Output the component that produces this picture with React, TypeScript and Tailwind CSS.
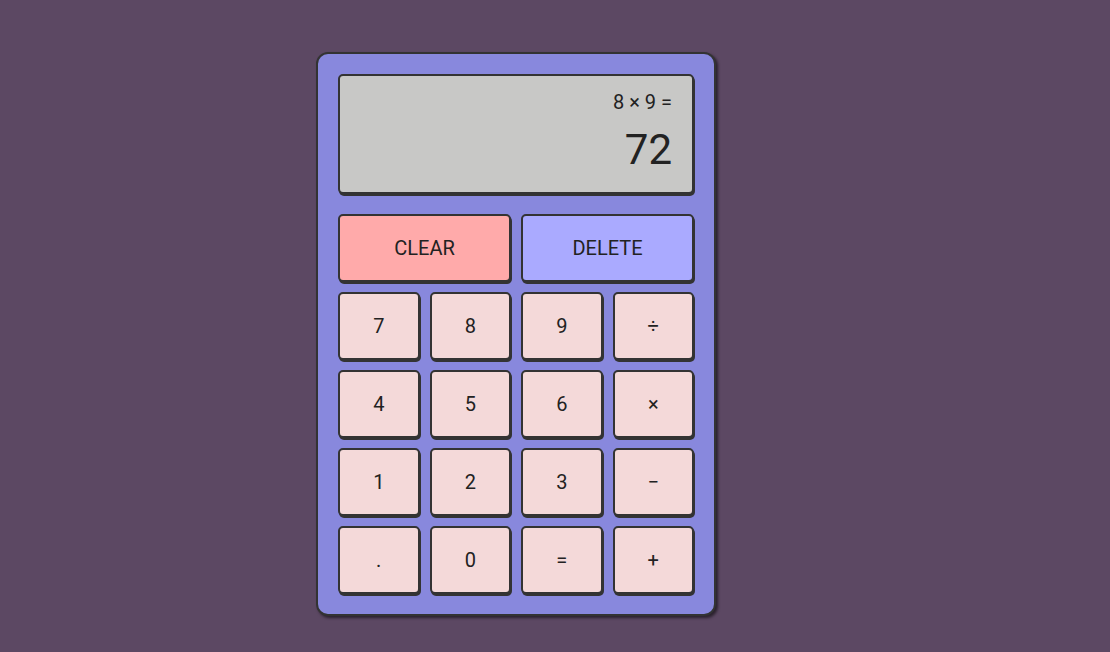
const keys = ["7", "8", "9", "÷", "4", "5", "6", "×", "1", "2", "3", "−", ".", "0", "=", "+"];

const btn =
  "h-[68px] rounded-[5px] border-2 border-[#333] shadow-[1px_2px_0_#333] text-[20px] text-[#222] flex items-center justify-center";

export default function App() {
  return (
    <div
      className="min-h-[652px] w-full bg-[#5c4863] pl-[316px] pt-[52px]"
      style={{ fontFamily: "Roboto, 'Noto Sans', sans-serif" }}
    >
      <div className="w-[400px] rounded-[12px] border-2 border-[#333] bg-[#8888dd] p-5 shadow-[2px_2px_3px_rgba(0,0,0,0.55)]">
        <div className="h-[120px] rounded-[5px] border-2 border-[#333] bg-[#c8c8c6] shadow-[1px_2px_0_#333] pr-5 pt-[12px] flex flex-col items-end text-[#222]">
          <div className="h-[28px] leading-[28px] text-[20px]">8 × 9 =</div>
          <div className="mt-[9px] leading-[50px] text-[42px]">72</div>
        </div>

        <div className="mt-5 grid grid-cols-2 gap-[10px]">
          <button className={`${btn} bg-[#ffaaaa]`}>CLEAR</button>
          <button className={`${btn} bg-[#aaaaff]`}>DELETE</button>
        </div>

        <div className="mt-[10px] grid grid-cols-4 gap-[10px]">
          {keys.map((k) => (
            <button key={k} className={`${btn} bg-[#f4d9d9]`}>
              {k}
            </button>
          ))}
        </div>
      </div>
    </div>
  );
}
